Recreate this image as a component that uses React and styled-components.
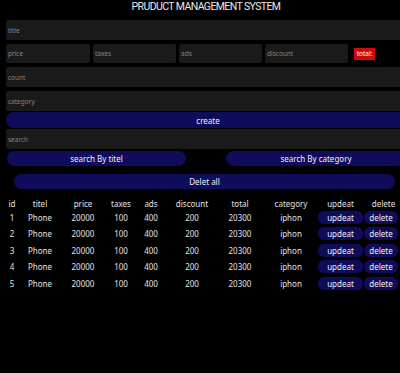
import React from "react";
import styled, { createGlobalStyle } from "styled-components";

const Global = createGlobalStyle`
  html, body { margin: 0; padding: 0; background: #000; overflow: hidden; }
  body { font-family: "Noto Sans", "DejaVu Sans", sans-serif; color: #e6e6e6; }
  * { box-sizing: border-box; }
`;

const Page = styled.div`
  width: 400px;
  height: 373px;
  background: #000;
  overflow: hidden;
`;

const Title = styled.h1`
  margin: 0;
  height: 16px;
  line-height: 14px;
  text-align: center;
  font-family: "Roboto", "Noto Sans", sans-serif;
  font-size: 10.5px;
  letter-spacing: -0.6px;
  font-weight: 400;
  color: #e8e8e8;
  padding-left: 12px;
`;

const Form = styled.div`
  padding: 4px 0 0 6px;
  width: 420px;
  display: flex;
  flex-direction: column;
`;

const Input = styled.input`
  display: block;
  height: ${(p) => p.$h || 20}px;
  width: ${(p) => (p.$w ? p.$w + "px" : "100%")};
  border: none;
  outline: none;
  background: #1a1a1a;
  color: #ccc;
  font-family: inherit;
  font-size: 6.5px;
  padding: 0 2px;
  margin-bottom: ${(p) => p.$mb ?? 4}px;
  border-radius: 2px;
  &::placeholder { color: #858585; }
`;

const PriceRow = styled.div`
  display: flex;
  align-items: center;
  gap: 3px;
  margin-bottom: 4px;
`;

const Total = styled.div`
  margin-left: 3px;
  width: 21px;
  height: 12px;
  background: #cc0a0a;
  color: #fff;
  font-size: 6.5px;
  display: flex;
  align-items: center;
  justify-content: center;
`;

const Btn = styled.button`
  display: flex;
  align-items: center;
  justify-content: center;
  height: ${(p) => p.$h || 16}px;
  width: ${(p) => (p.$w ? p.$w + "px" : "100%")};
  border: none;
  border-radius: ${(p) => p.$r || 9}px;
  background: #0f0c5c;
  color: #f0f0f0;
  font-family: inherit;
  font-size: ${(p) => p.$fs || 8}px;
  padding: 0;
  margin: 0;
  cursor: pointer;
`;

const CreateBtn = styled(Btn)`
  margin-bottom: 1px;
  padding-right: 10px;
`;

const SearchRow = styled.div`
  display: flex;
  gap: 40px;
  margin: 1px 0 8px 1px;
`;

const DeleteAllWrap = styled.div`
  padding: 0 5px 0 14px;
  width: 400px;
`;

const Table = styled.table`
  margin-top: 8px;
  width: 402px;
  table-layout: fixed;
  border-collapse: collapse;
  font-size: 8px;
  color: #e2e2e2;
  th, td { padding: 0; text-align: center; font-weight: 400; }
  th { height: 12px; }
  td { height: 16.5px; }
`;

const RowBtn = styled(Btn)`
  height: 13px;
  border-radius: 6px;
  font-size: 8px;
  margin: ${(p) => (p.$left ? "0 0 0 -1px" : "0 auto")};
`;

const cols = [24, 32, 54, 22, 38, 44, 52, 50, 49, 37];
const heads = ["id", "titel", "price", "taxes", "ads", "discount", "total", "category", "updeat", "delete"];
const rows = [1, 2, 3, 4, 5];

export default function App() {
  return (
    <Page>
      <Global />
      <Title>PRUDUCT MANAGEMENT SYSTEM</Title>
      <Form>
        <Input placeholder="title" />
        <PriceRow>
          <Input $w={84} $h={19} $mb={0} placeholder="price" />
          <Input $w={83} $h={19} $mb={0} placeholder="taxes" />
          <Input $w={83} $h={19} $mb={0} placeholder="ads" />
          <Input $w={83} $h={19} $mb={0} placeholder="discount" />
          <Total>total:</Total>
        </PriceRow>
        <Input placeholder="count" />
        <Input $mb={1} placeholder="category" />
        <CreateBtn>create</CreateBtn>
        <Input $mb={1} placeholder="search" />
        <SearchRow>
          <Btn $w={179} $h={15}>search By titel</Btn>
          <Btn $w={180} $h={15}>search By category</Btn>
        </SearchRow>
      </Form>
      <DeleteAllWrap>
        <Btn $h={15}>Delet all</Btn>
      </DeleteAllWrap>
      <Table>
        <colgroup>
          {cols.map((w, i) => (
            <col key={i} style={{ width: w }} />
          ))}
        </colgroup>
        <thead>
          <tr>
            {heads.map((h) => (
              <th key={h}>{h}</th>
            ))}
          </tr>
        </thead>
        <tbody>
          {rows.map((r) => (
            <tr key={r}>
              <td>{r}</td>
              <td>Phone</td>
              <td>20000</td>
              <td>100</td>
              <td>400</td>
              <td>200</td>
              <td>20300</td>
              <td>iphon</td>
              <td><RowBtn $w={45}>updeat</RowBtn></td>
              <td><RowBtn $w={34} $left>delete</RowBtn></td>
            </tr>
          ))}
        </tbody>
      </Table>
    </Page>
  );
}
